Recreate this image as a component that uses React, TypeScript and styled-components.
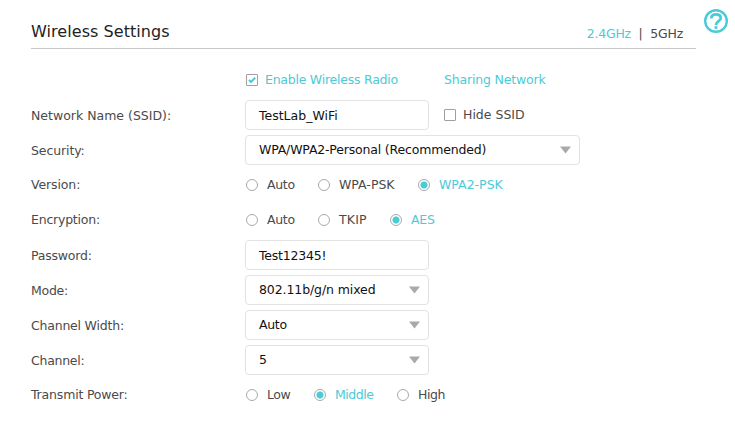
import React from "react";
import styled, { createGlobalStyle } from "styled-components";

const ACCENT = "#4acbd6";

const GlobalStyle = createGlobalStyle`
  * { box-sizing: border-box; }
  body {
    margin: 0;
    background: #fff;
    color: #4a4a4a;
    font: 12.5px/30px Verdana, "DejaVu Sans", sans-serif;
    overflow: hidden;
  }
`;

const Page = styled.main`
  display: flex;
  width: 735px;
  height: 431px;
  padding-left: 31px;
`;

const Panel = styled.section`
  width: 665px;
`;

const Header = styled.header`
  display: flex;
  justify-content: space-between;
  height: 49px;
  border-bottom: 1px solid #c8c8c8;
`;

const Title = styled.h1`
  margin: 17px 0 0;
  font-size: 16px;
  font-weight: 400;
  line-height: 30px;
  letter-spacing: 0.06px;
  color: #222;
`;

const Bands = styled.nav`
  display: flex;
  gap: 7.5px;
  padding: 19px 13px 0 0;
`;

const Text = styled.span<{ $accent?: boolean; $track?: number }>`
  color: ${(p) => (p.$accent ? ACCENT : "inherit")};
  letter-spacing: ${(p) => p.$track ?? 0}px;
  white-space: pre;
`;

const Label = styled(Text)<{ $low?: boolean }>`
  padding-top: ${(p) => (p.$low ? 1 : 0)}px;
`;

const Form = styled.form`
  display: grid;
  gap: 5px;
  padding-top: 16px;
`;

const Row = styled.div`
  display: grid;
  grid-template: 30px / 214px 1fr;
`;

const Controls = styled.div<{ $inset?: boolean }>`
  display: flex;
  align-items: center;
  padding-left: ${(p) => (p.$inset ? 1 : 0)}px;
`;

const Field = styled.div<{ $wide?: boolean }>`
  display: flex;
  align-items: center;
  justify-content: space-between;
  width: ${(p) => (p.$wide ? 335 : 184)}px;
  height: 30px;
  padding: 0 8px 0 13px;
  border: 1px solid #e2e2e2;
  border-radius: 4px;
  line-height: 28px;
  color: #111;
`;

const InputField = styled(Field)`
  line-height: 26px;
  padding-top: 2px;
`;

const Option = styled.label<{ $width?: number; $gap?: number }>`
  display: flex;
  align-items: center;
  gap: ${(p) => p.$gap ?? 9}px;
  width: ${(p) => (p.$width ? `${p.$width}px` : "auto")};
  white-space: nowrap;
`;

const Radio = styled.span<{ $on?: boolean }>`
  flex: none;
  width: 12px;
  height: 12px;
  border: 1px solid #a7a9ac;
  border-radius: 50%;
  background: ${(p) => (p.$on ? `radial-gradient(circle, ${ACCENT} 3.2px, #fff 3.9px)` : "#fff")};
`;

const Check = styled.span`
  display: flex;
  flex: none;
  width: 12px;
  height: 12px;
  border: 1px solid #a0a0a0;
  border-radius: 1px;
`;

const HideOption = styled(Option)`
  margin-left: 15px;
`;

const SharingLink = styled.a`
  color: ${ACCENT};
  letter-spacing: -0.18px;
`;

const HelpIcon = styled.svg`
  margin: 9px 0 0 8px;
`;

const Arrow = () => (
  <svg width="11" height="8" viewBox="0 0 11 8">
    <path d="M0 0.5H11L5.5 7.5Z" fill="#a7a9ac" />
  </svg>
);

interface Choice { label: string; width?: number; on?: boolean; track?: number }

const Choices = ({ items }: { items: Choice[] }) => (
  <Controls $inset>
    {items.map((i) => (
      <Option key={i.label} $width={i.width}>
        <Radio $on={i.on} />
        <Text $accent={i.on} $track={i.track}>{i.label}</Text>
      </Option>
    ))}
  </Controls>
);

const Select = ({ value, wide, track }: { value: string; wide?: boolean; track?: number }) => (
  <Field $wide={wide}>
    <Text $track={track}>{value}</Text>
    <Arrow />
  </Field>
);

export default function App() {
  return (
    <>
      <GlobalStyle />
      <Page>
        <Panel>
          <Header>
            <Title>Wireless Settings</Title>
            <Bands>
              <Text $accent $track={-0.2}>2.4GHz</Text>
              <Text>|</Text>
              <Text $track={-0.2}>5GHz</Text>
            </Bands>
          </Header>
          <Form>
            <Row>
              <span />
              <Controls $inset>
                <Option $width={198} $gap={7}>
                  <Check>
                    <svg width="10" height="10" viewBox="0 0 10 10">
                      <path d="M2 4.8L4 7L8.2 2.8" fill="none" stroke={ACCENT} strokeWidth="2" />
                    </svg>
                  </Check>
                  <Text $accent $track={-0.24}>Enable Wireless Radio</Text>
                </Option>
                <SharingLink>Sharing Network</SharingLink>
              </Controls>
            </Row>
            <Row>
              <Label $low>Network Name (SSID):</Label>
              <Controls>
                <InputField><Text>TestLab_WiFi</Text></InputField>
                <HideOption $gap={7}><Check /><Text>Hide SSID</Text></HideOption>
              </Controls>
            </Row>
            <Row>
              <Label $low $track={-0.1}>Security:</Label>
              <Controls><Select wide track={-0.18} value="WPA/WPA2-Personal (Recommended)" /></Controls>
            </Row>
            <Row>
              <Label $track={-0.12}>Version:</Label>
              <Choices items={[{ label: "Auto", width: 72, track: -0.3 }, { label: "WPA-PSK", width: 100 }, { label: "WPA2-PSK", on: true }]} />
            </Row>
            <Row>
              <Label $track={-0.22}>Encryption:</Label>
              <Choices items={[{ label: "Auto", width: 72, track: -0.3 }, { label: "TKIP", width: 72, track: 0.2 }, { label: "AES", on: true, track: -0.2 }]} />
            </Row>
            <Row>
              <Label $low $track={-0.22}>Password:</Label>
              <Controls><InputField><Text $track={-0.2}>Test12345!</Text></InputField></Controls>
            </Row>
            <Row>
              <Label $low $track={-0.25}>Mode:</Label>
              <Controls><Select track={-0.1} value="802.11b/g/n mixed" /></Controls>
            </Row>
            <Row>
              <Label $low $track={-0.21}>Channel Width:</Label>
              <Controls><Select track={-0.3} value="Auto" /></Controls>
            </Row>
            <Row>
              <Label $low $track={-0.26}>Channel:</Label>
              <Controls><Select value="5" /></Controls>
            </Row>
            <Row>
              <Label $track={-0.18}>Transmit Power:</Label>
              <Choices items={[{ label: "Low", width: 68, track: -0.4 }, { label: "Middle", width: 83, on: true, track: -0.45 }, { label: "High", track: -0.45 }]} />
            </Row>
          </Form>
        </Panel>
        <HelpIcon width="24" height="24" viewBox="0 0 24 24" fill="none" stroke={ACCENT}>
          <circle cx="12" cy="12" r="10.8" strokeWidth="2.4" />
          <path d="M7.3 9.4C7.3 6.7 9.1 5.3 12 5.3S16.8 6.7 16.8 9.2C16.8 12.2 12 12.2 12 16" strokeWidth="2.8" />
          <path d="M12 17.2V19.8" strokeWidth="2.9" />
        </HelpIcon>
      </Page>
    </>
  );
}
